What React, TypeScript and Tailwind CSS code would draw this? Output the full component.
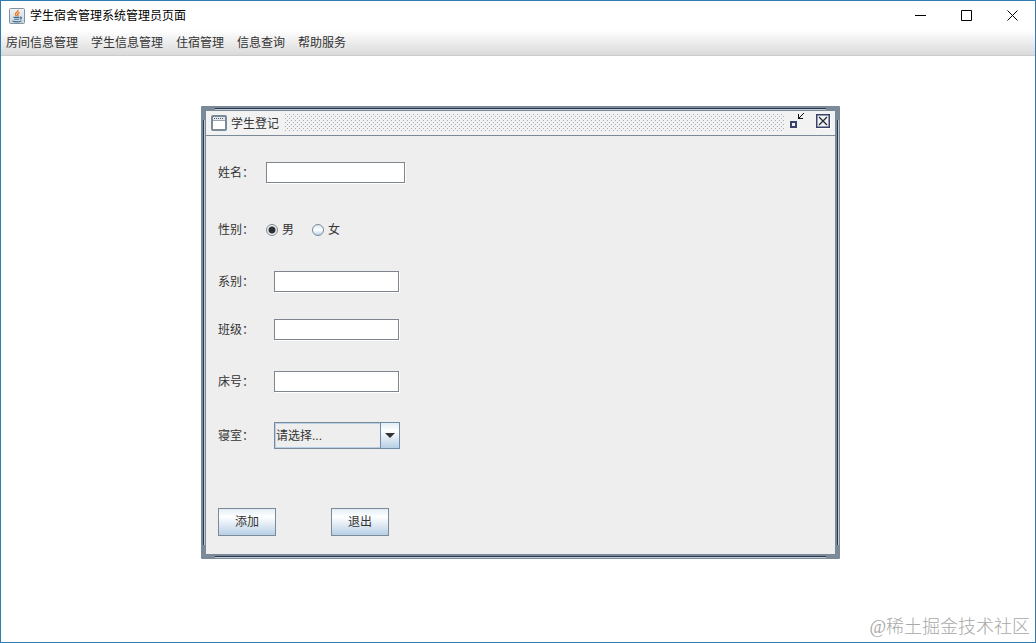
import { type ReactNode } from 'react'

const menus = ['房间信息管理', '学生信息管理', '住宿管理', '信息查询', '帮助服务']

const JavaIcon = () => (
  <svg width="16" height="16" viewBox="0 0 16 16" fill="none" aria-hidden="true">
    <defs>
      <linearGradient id="java-bg" x1="0" y1="0" x2="0" y2="1">
        <stop offset="0" stopColor="#f1f3f5" />
        <stop offset="1" stopColor="#cbd5de" />
      </linearGradient>
    </defs>
    <rect x="0.5" y="0.5" width="15" height="15" rx="1" fill="url(#java-bg)" stroke="#8392a0" />
    <path d="M9 2C9.4 4 6 4.6 6.4 6.3c.2.8.9 1.2 1 1.9M10.6 4.4C8.8 5.1 8.2 6 8.9 7c.3.5.1.9-.3 1.3" stroke="#e87722" strokeWidth="1.4" />
    <path d="M4.5 9.4h6M5.2 11.2h5M11 9.2c1.9-.5 2 1.4.1 1.9M3.5 13c2.2.9 6.7.8 9-.1" stroke="#3d6a94" strokeWidth="1.1" />
  </svg>
)

const FrameIcon = () => (
  <svg width="16" height="16" viewBox="0 0 16 16" fill="none" aria-hidden="true">
    <rect x="1" y="1" width="14" height="14" rx="1" fill="#fff" stroke="#7a8a99" strokeWidth="2" />
    <path d="M2 2h12v3H2z" fill="#e4e8ec" />
    <path d="M2 5.5h12" stroke="#9aa5b0" />
    <path d="M3 3.5h10" stroke="#55606b" strokeDasharray="1 1" />
  </svg>
)

const RestoreIcon = () => (
  <svg width="16" height="16" viewBox="0 0 16 16" shapeRendering="crispEdges" aria-hidden="true">
    <path d="M2 8h7v7H2zM4 10v3h3v-3z" fill="#39426a" fillRule="evenodd" />
    <path d="M10 1h1v4h4v1h-5zM11 4h1v1h-1zM12 3h1v1h-1zM13 2h1v1h-1zM14 1h1v1h-1zM15 0h1v1h-1z" fill="#111" />
  </svg>
)

const CloseIcon = () => (
  <svg width="15" height="15" viewBox="0 0 15 15" fill="none" aria-hidden="true">
    <path d="M14.5 1v13.5H1" stroke="#fff" />
    <rect x="0.75" y="0.75" width="12.5" height="12.5" stroke="#39426a" strokeWidth="1.5" />
    <path d="M3 3l8 8M11 3l-8 8" stroke="#222938" strokeWidth="1.3" />
  </svg>
)

type WindowButtonProps = { label: string; d: string }

const WindowButton = ({ label, d }: WindowButtonProps) => (
  <button type="button" aria-label={label} className="flex h-full w-[46px] items-center justify-center">
    <svg width="11" height="11" viewBox="0 0 11 11" fill="none" stroke="#000" aria-hidden="true">
      <path d={d} />
    </svg>
  </button>
)

type TextRowProps = { id: string; label: string; wide?: boolean; className?: string }

const TextRow = ({ id, label, wide, className }: TextRowProps) => (
  <div className={`flex items-center ${className ?? ''}`}>
    <label htmlFor={id} className={wide ? 'w-12' : 'w-14'}>
      {label}
    </label>
    <input
      id={id}
      type="text"
      className={`h-[21px] border border-[#7f858c] bg-white px-1 shadow-[1px_1px_0_#fff] outline-none ${wide ? 'w-[139px]' : 'w-[125px]'}`}
    />
  </div>
)

type RadioProps = { id: string; label: string; defaultChecked?: boolean }

const Radio = ({ id, label, defaultChecked }: RadioProps) => (
  <label htmlFor={id} className="flex items-center gap-1">
    <input
      id={id}
      type="radio"
      name="gender"
      defaultChecked={defaultChecked}
      className="size-3 appearance-none rounded-full border border-[#7a8a99] bg-linear-to-b from-[#dde8f3] via-white to-[#b8cfe5] checked:bg-[radial-gradient(circle,#2b2f33_3px,transparent_4px)]"
    />
    {label}
  </label>
)

const MetalButton = ({ children }: { children: ReactNode }) => (
  <button
    type="button"
    className="h-7 w-[58px] border border-[#7a8a99] bg-linear-to-b from-[#e3edf6] via-white via-30% to-[#b8cfe5] text-center"
  >
    {children}
  </button>
)

// Grooves that run along the frame border and stop short of the corners
const FrameGrooves = () => (
  <>
    <span className="absolute inset-x-3.5 top-0.5 h-0.5 border-b border-[#c3ccd6] bg-[#2c3550]" />
    <span className="absolute inset-x-3.5 bottom-px h-0.5 border-b border-[#c3ccd6] bg-[#2c3550]" />
    <span className="absolute inset-y-3.5 left-0.5 w-0.5 border-r border-[#c3ccd6] bg-[#2c3550]" />
    <span className="absolute inset-y-3.5 right-px w-0.5 border-r border-[#c3ccd6] bg-[#2c3550]" />
  </>
)

const StudentFrame = () => (
  <section className="absolute top-[50px] left-[200px] rounded-[1px] border-5 border-[#7a8a99] bg-[#eeeeee] text-[#333]">
    <div className="absolute -inset-[5px] pointer-events-none">
      <FrameGrooves />
    </div>
    <header className="flex h-[25px] items-center border-b border-[#7a8a99] bg-[#f2f2f2] pr-1 pl-[5px]">
      <FrameIcon />
      <h2 className="ml-1 pt-px">学生登记</h2>
      <span className="ml-1.5 h-[18px] flex-1 bg-[radial-gradient(circle_at_0.5px_0.5px,#a3acb6_0.5px,transparent_1px),radial-gradient(circle_at_2.5px_2.5px,#a3acb6_0.5px,transparent_1px)] bg-size-[4px_4px]" />
      <button type="button" aria-label="还原" className="ml-1 pb-1">
        <RestoreIcon />
      </button>
      <button type="button" aria-label="关闭" className="ml-3 pb-1">
        <CloseIcon />
      </button>
    </header>

    <form className="w-[629px] px-3 pt-[26px] pb-[18px]">
      <TextRow id="name" label="姓名：" wide />

      <div role="radiogroup" aria-label="性别" className="mt-9 flex h-[21px] items-center">
        <span className="w-12">性别：</span>
        <div className="flex gap-[18px]">
          <Radio id="male" label="男" defaultChecked />
          <Radio id="female" label="女" />
        </div>
      </div>

      <TextRow id="department" label="系别：" className="mt-[31px]" />
      <TextRow id="class" label="班级：" className="mt-[27px]" />
      <TextRow id="bed" label="床号：" className="mt-[31px]" />

      <div className="mt-[30px] flex items-center">
        <label htmlFor="dorm" className="w-14">
          寝室：
        </label>
        <div className="relative h-[27px] w-[126px]">
          <select
            id="dorm"
            className="size-full appearance-none border border-[#7a8a99] bg-[#eeeeee] pl-px shadow-[inset_0_0_0_1px_#b8cfe5] outline-none"
          >
            <option>请选择...</option>
          </select>
          <span className="pointer-events-none absolute inset-y-0 right-0 flex w-5 items-center justify-center border border-[#6f8baa] bg-linear-to-b from-[#e3edf6] via-white via-30% to-[#b8cfe5]">
            <svg width="10" height="5" viewBox="0 0 10 5" aria-hidden="true">
              <path d="M0 0h10L5 5z" fill="#333" />
            </svg>
          </span>
        </div>
      </div>

      <div className="mt-[59px] flex gap-[55px]">
        <MetalButton>添加</MetalButton>
        <MetalButton>退出</MetalButton>
      </div>
    </form>
  </section>
)

const App = () => (
  <div className="flex min-h-screen flex-col border border-[#2f7cb0] bg-white font-['Liberation_Sans','Noto_Sans_CJK_SC',sans-serif] text-xs">
    <header className="flex h-[29px] items-center pl-2 text-black">
      <JavaIcon />
      <h1 className="ml-[5px] flex-1">学生宿舍管理系统管理员页面</h1>
      <WindowButton label="最小化" d="M0 5.5h11" />
      <WindowButton label="最大化" d="M.5.5h10v10H.5z" />
      <WindowButton label="关闭窗口" d="M.5.5l10 10M10.5.5l-10 10" />
    </header>

    <nav className="flex h-[26px] items-center gap-[13px] border-b border-[#cccccc] bg-linear-to-b from-white to-[#dadada] pl-[5px] text-[#333]">
      {menus.map((menu) => (
        <button key={menu} type="button">
          {menu}
        </button>
      ))}
    </nav>

    <main className="relative flex-1">
      <StudentFrame />
      <span className="absolute right-[5px] bottom-px font-['Liberation_Serif','Noto_Sans_CJK_SC',serif] text-lg font-light text-[#a8a8a8]">
        @稀土掘金技术社区
      </span>
    </main>
  </div>
)

export default App
